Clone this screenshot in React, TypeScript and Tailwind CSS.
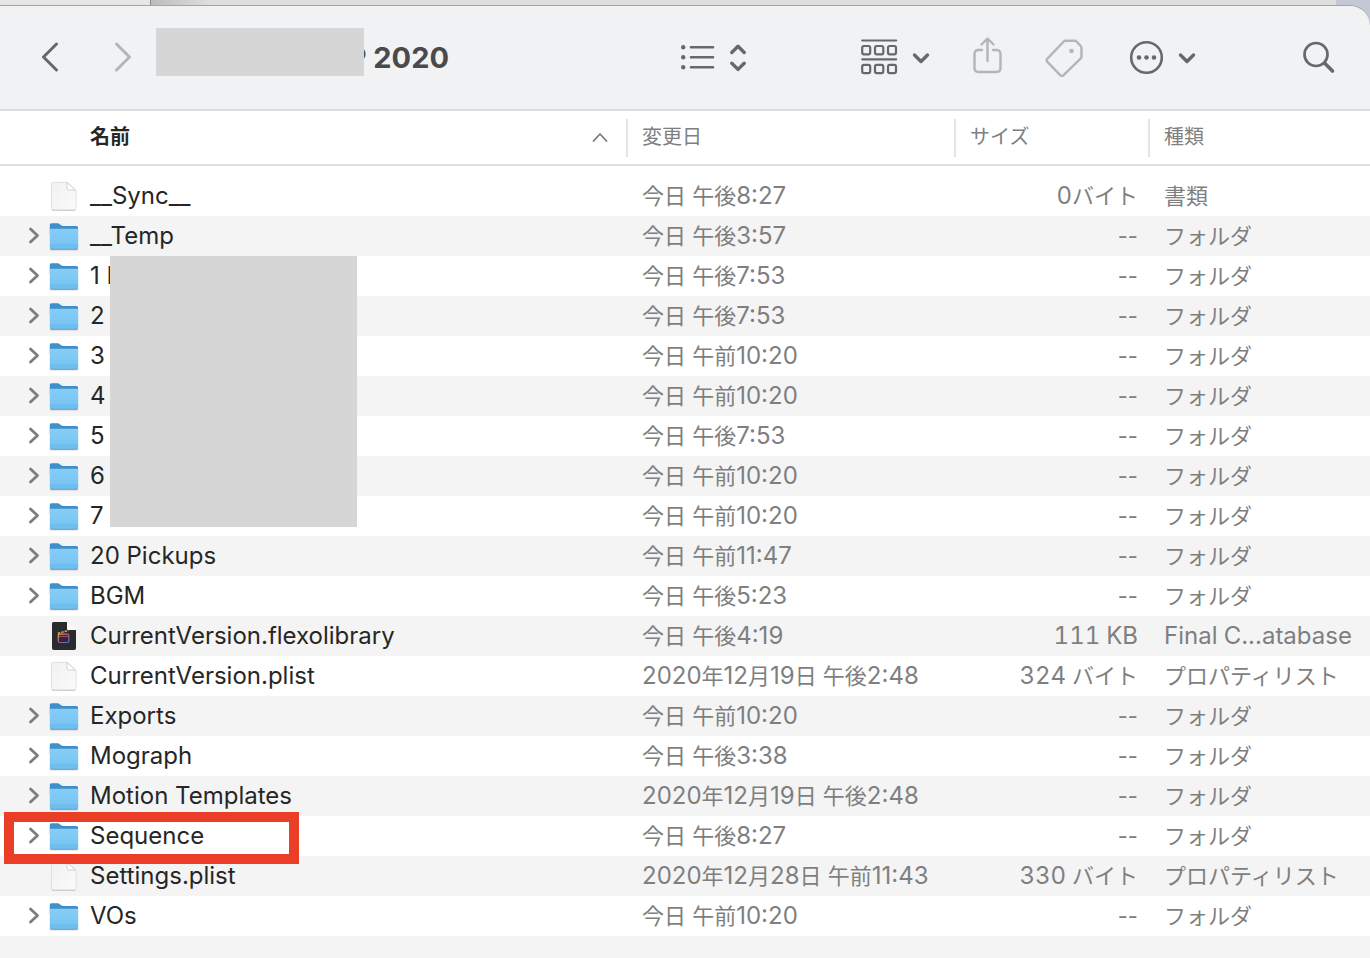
import type { ReactNode } from "react";

type Kind = "folder" | "file" | "library";

type Entry = {
  name: string;
  date: string;
  size?: string;
  type?: string;
  icon?: Kind;
  mark?: "redacted" | "highlight";
};

const entries: Entry[] = [
  { name: "__Sync__", date: "今日 午後8:27", size: "0バイト", type: "書類", icon: "file" },
  { name: "__Temp", date: "今日 午後3:57" },
  { name: "1 E", date: "今日 午後7:53", mark: "redacted" },
  { name: "2", date: "今日 午後7:53" },
  { name: "3", date: "今日 午前10:20" },
  { name: "4", date: "今日 午前10:20" },
  { name: "5", date: "今日 午後7:53" },
  { name: "6", date: "今日 午前10:20" },
  { name: "7", date: "今日 午前10:20" },
  { name: "20 Pickups", date: "今日 午前11:47" },
  { name: "BGM", date: "今日 午後5:23" },
  { name: "CurrentVersion.flexolibrary", date: "今日 午後4:19", size: "111 KB", type: "Final C...atabase", icon: "library" },
  { name: "CurrentVersion.plist", date: "2020年12月19日 午後2:48", size: "324 バイト", type: "プロパティリスト", icon: "file" },
  { name: "Exports", date: "今日 午前10:20" },
  { name: "Mograph", date: "今日 午後3:38" },
  { name: "Motion Templates", date: "2020年12月19日 午後2:48" },
  { name: "Sequence", date: "今日 午後8:27", mark: "highlight" },
  { name: "Settings.plist", date: "2020年12月28日 午前11:43", size: "330 バイト", type: "プロパティリスト", icon: "file" },
  { name: "VOs", date: "今日 午前10:20" },
];

function Defs() {
  return (
    <svg className="absolute h-0 w-0" aria-hidden="true">
      <defs>
        <linearGradient id="folderFront" x1="0" y1="0" x2="0" y2="1">
          <stop offset="0" stopColor="#86cdf8" />
          <stop offset="1" stopColor="#74c3f1" />
        </linearGradient>
        <linearGradient id="paper" x1="0" y1="0" x2="1" y2="1">
          <stop offset="0" stopColor="#f1f1f1" />
          <stop offset="1" stopColor="#fbfbfb" />
        </linearGradient>
        <linearGradient id="clap" x1="0" y1="0" x2="1" y2="1">
          <stop offset="0" stopColor="#e8c03c" />
          <stop offset="0.45" stopColor="#c14f9c" />
          <stop offset="1" stopColor="#4d6fd6" />
        </linearGradient>
      </defs>
    </svg>
  );
}

function FolderIcon() {
  return (
    <svg width="30" height="30" viewBox="0 0 30 30" aria-hidden="true">
      <path d="M1 27.500h28v1.300a1 1 0 0 1-1 .8H2a1 1 0 0 1-1-.8z" fill="#000" opacity="0.14" />
      <path d="M.8 3.800q0-1.500 1.500-1.500h6.400q1.200 0 2.100.9l1.300 1.100q.9.800 2.100.8h13.300q1.500 0 1.500 1.500V13H.8z" fill="#3f8fca" />
      <path d="M.8 9q0-1.200 1.200-1.200h26q1.200 0 1.200 1.200v18q0 1.500-1.500 1.500H2.300Q.8 28.500.8 27z" fill="url(#folderFront)" />
      <path d="M1 23.800h28M1 25.800h28" stroke="#5fb0e3" strokeWidth="0.7" />
      <path d="M1.400 28.200h27.200" stroke="#5299c8" strokeWidth="0.9" />
    </svg>
  );
}

function FileIcon() {
  return (
    <svg width="30" height="30" viewBox="0 0 30 30" aria-hidden="true">
      <path d="M4.500 1.300h13.500l9 8.200v17.800q0 1.700-1.700 1.700H4.200q-1.700 0-1.700-1.700V3q0-1.700 2-1.700z" fill="url(#paper)" stroke="#dadada" strokeWidth="0.8" />
      <path d="M3 29.300h23.500" stroke="#bdbdbd" strokeWidth="0.8" />
      <path d="M18 1.500v6q0 1.500 1.500 1.500h7z" fill="#fff" stroke="#c6c6c6" strokeWidth="0.8" />
    </svg>
  );
}

function LibraryIcon() {
  return (
    <svg width="30" height="30" viewBox="0 0 30 30" aria-hidden="true">
      <path d="M4.500 1h13.500v6.500q0 1.500 1.500 1.500H27v18.300q0 1.700-1.700 1.700H4.700Q3 29 3 27.300V2.500Q3 1 4.500 1z" fill="#2a2b2b" />
      <path d="M18 1l9 8h-7.500q-1.500 0-1.500-1.500z" fill="#fafafa" />
      <rect x="9.300" y="13.200" width="10.500" height="8.300" rx="1.200" fill="none" stroke="url(#clap)" strokeWidth="1.200" />
      <path d="M9.500 15.400h10.300" stroke="#c0508f" strokeWidth="0.9" />
      <path d="M8.800 12.200l10.700-2.600" stroke="#d9a73c" strokeWidth="1.500" strokeDasharray="2.500 1" />
    </svg>
  );
}

function RowIcon({ icon = "folder" }: { icon?: Kind }) {
  if (icon === "file") return <FileIcon />;
  if (icon === "library") return <LibraryIcon />;
  return <FolderIcon />;
}

function Stroke({ w, h, d, sw = 3 }: { w: number; h: number; d: string; sw?: number }) {
  return (
    <svg
      width={w}
      height={h}
      viewBox={`0 0 ${w} ${h}`}
      fill="none"
      stroke="currentColor"
      strokeWidth={sw}
      strokeLinecap="round"
      strokeLinejoin="round"
      aria-hidden="true"
    >
      <path d={d} />
    </svg>
  );
}

function ToolButton({ label, dim, children }: { label: string; dim?: boolean; children: ReactNode }) {
  return (
    <button
      type="button"
      aria-label={label}
      className={`flex flex-none items-center gap-3.5 ${dim ? "text-[#b4b5b7]" : "text-[#67686a]"}`}
    >
      {children}
    </button>
  );
}

const chevronDown = "M2.500 6L9 12.500 15.500 6";

function Toolbar() {
  return (
    <header className="flex h-[106px] items-center rounded-tr-[20px] border-t border-b-2 border-t-[#a5a5a7] border-b-[#dcdcde] bg-[#f1f2f4] pr-[34px] pl-[38px]">
      <div className="flex items-center gap-[49px]">
        <ToolButton label="戻る">
          <Stroke w={24} h={32} d="M18.500 2L5.500 15l13 13" />
        </ToolButton>
        <ToolButton label="進む" dim>
          <Stroke w={24} h={32} d="M5.500 2l13 13-13 13" />
        </ToolButton>
      </div>
      <h1 className="relative ml-[21px] w-[293px] flex-none text-right text-[29px] leading-9 font-bold text-[#4a4a4c]">
        P 2020
        <span className="absolute -top-3 left-0 h-12 w-52 bg-[#d6d6d6]" />
      </h1>
      <div className="ml-auto flex items-center">
        <ToolButton label="表示">
          <svg width="35" height="26" viewBox="0 0 35 26" fill="currentColor" aria-hidden="true">
            <circle cx="2.200" cy="2.200" r="2.200" />
            <circle cx="2.200" cy="12.200" r="2.200" />
            <circle cx="2.200" cy="22.200" r="2.200" />
            <path d="M10 2.200h22M10 12.200h22M10 22.200h22" stroke="currentColor" strokeWidth="2.600" strokeLinecap="round" />
          </svg>
          <Stroke w={18} h={30} d="M1.800 9.500L8 3.300l6.200 6.200M1.800 20.200L8 26.400l6.200-6.200" sw={3.4} />
        </ToolButton>
        <div className="ml-[113px] flex items-center gap-[42px]">
          <ToolButton label="グループ分け">
            <svg width="37" height="38" viewBox="0 0 37 38" fill="none" stroke="currentColor" strokeWidth="2.200" strokeLinecap="round" aria-hidden="true">
              <path d="M1.200 1.500h34M1.200 20.300h34" />
              <rect x="1.200" y="7" width="8" height="8.300" rx="1.800" />
              <rect x="14" y="7" width="8.300" height="8.300" rx="1.800" />
              <rect x="27" y="7" width="8" height="8.300" rx="1.800" />
              <rect x="1.200" y="25.800" width="8" height="8.300" rx="1.800" />
              <rect x="14" y="25.800" width="8.300" height="8.300" rx="1.800" />
              <rect x="27" y="25.800" width="8" height="8.300" rx="1.800" />
            </svg>
            <Stroke w={18} h={18} d={chevronDown} sw={3.4} />
          </ToolButton>
          <ToolButton label="共有" dim>
            <Stroke
              w={31}
              h={42}
              d="M10 13H6.500Q2.500 13 2.500 17v14q0 4 4 4h18q4 0 4-4V17q0-4-4-4H21M15.500 24V2M9.500 7.500l6-6 6 6"
              sw={2.4}
            />
          </ToolButton>
          <ToolButton label="タグ" dim>
            <svg width="38" height="38" viewBox="0 0 38 38" fill="none" stroke="currentColor" strokeWidth="2.400" strokeLinejoin="round" aria-hidden="true">
              <path d="M20.500 1.800h9.300q1 0 1.700.7l4.300 4.600q.7.700.7 1.700v8.800q0 1-.7 1.700L18.600 36.100q-1.700 1.700-3.400 0L2.400 22.800q-1.500-1.600 0-3.200L18.800 2.500q.7-.7 1.700-.7z" />
              <circle cx="26.500" cy="12" r="2.300" fill="currentColor" stroke="none" />
            </svg>
          </ToolButton>
        </div>
        <div className="ml-[45px] flex items-center gap-[106px]">
          <ToolButton label="操作">
            <svg width="36" height="36" viewBox="0 0 36 36" fill="none" aria-hidden="true">
              <circle cx="18.500" cy="17.500" r="15.300" stroke="currentColor" strokeWidth="2.600" />
              <g fill="currentColor">
                <circle cx="11" cy="17.500" r="2.300" />
                <circle cx="18.500" cy="17.500" r="2.300" />
                <circle cx="26" cy="17.500" r="2.300" />
              </g>
            </svg>
            <Stroke w={18} h={18} d={chevronDown} sw={3.4} />
          </ToolButton>
          <ToolButton label="検索">
            <svg width="34" height="34" viewBox="0 0 34 34" fill="none" stroke="currentColor" strokeLinecap="round" aria-hidden="true">
              <circle cx="14" cy="13.500" r="11.500" strokeWidth="2.700" />
              <path d="M23 22.500l7.500 7.500" strokeWidth="3.600" />
            </svg>
          </ToolButton>
        </div>
      </div>
    </header>
  );
}

function HeadCell({ children }: { children: ReactNode }) {
  return (
    <th scope="col" className="p-0 text-left font-normal">
      <div className="-ml-0.5 flex h-[38px] items-center border-l-2 border-[#e4e4e4] pb-0.5 pl-3.5">{children}</div>
    </th>
  );
}

// Latin letters and digits are set one step larger than kanji and kana
function Mixed({ text }: { text: string }) {
  return text
    .split(/([\x21-\x7e]+)/)
    .map((part, i) => (i % 2 ? <span key={i} className="text-2xl leading-8">{part}</span> : part));
}

function Row({ entry }: { entry: Entry }) {
  const { name, date, size, type = "フォルダ", icon, mark } = entry;
  return (
    <tr className="h-10 odd:bg-white even:bg-[#f4f4f4]">
      <td className="relative p-0">
        <div className="flex items-center pl-[27px] text-2xl leading-8 text-[#262626]">
          {icon ? (
            <span className="w-3.5" />
          ) : (
            <button type="button" aria-label={`${name} を開く`} className="text-[#7d7d7d]">
              <Stroke w={14} h={20} d="M3.500 3l7 6.500-7 6.500" sw={2.8} />
            </button>
          )}
          <span className="ml-2 flex-none">
            <RowIcon icon={icon} />
          </span>
          <span className="ml-[11px] whitespace-nowrap">{name}</span>
        </div>
        {mark === "redacted" && <div className="absolute top-0 left-[110px] z-10 h-[271px] w-[247px] bg-[#d6d6d6]" />}
        {mark === "highlight" && (
          <div className="pointer-events-none absolute -top-1 left-1 z-10 h-[52px] w-[295px] border-10 border-[#ea3f26]" />
        )}
      </td>
      <td className="p-0 pl-3.5 whitespace-nowrap">
        <Mixed text={date} />
      </td>
      <td className="p-0 pr-3 text-right whitespace-nowrap">
        {size ? (
          <span className="tabular-nums">
            <Mixed text={size} />
          </span>
        ) : (
          "--"
        )}
      </td>
      <td className="p-0 pl-3.5 whitespace-nowrap">
        <Mixed text={type} />
      </td>
    </tr>
  );
}

export default function App() {
  return (
    <div className="flex min-h-screen flex-col bg-[#f4f4f4] font-['Inter','Noto_Sans_CJK_JP',sans-serif]">
      <Defs />
      <div className="bg-[#dedede]">
        <div className="flex h-[5px]">
          <div className="w-[151px] border-r border-[#8b8b8b] bg-[#e6e6e6]" />
          <div className="flex-1 bg-linear-to-r from-[#bcbcbc] to-[#dedede] to-5%" />
          <div className="w-[34px] bg-[#c3c9d4]" />
        </div>
        <div className="bg-linear-to-l from-[#c3c9d4] from-[34px] to-[#dedede] to-[34px]">
          <Toolbar />
        </div>
      </div>
      <table className="w-full table-fixed border-collapse text-[22px] leading-8 text-[#7f7f7f]">
        <colgroup>
          <col />
          <col className="w-[328px]" />
          <col className="w-[194px]" />
          <col className="w-[220px]" />
        </colgroup>
        <thead className="bg-white text-xl">
          <tr className="h-[54px] border-b-2 border-[#e0e0e0]">
            <th scope="col" aria-sort="ascending" className="p-0 text-left font-semibold text-[#262626]">
              <div className="flex items-center justify-between pr-5 pb-0.5 pl-[90px]">
                名前
                <span className="text-[#7a7a7a]">
                  <Stroke w={16} h={12} d="M1.500 10L8 3l6.500 7" sw={1.8} />
                </span>
              </div>
            </th>
            <HeadCell>変更日</HeadCell>
            <HeadCell>サイズ</HeadCell>
            <HeadCell>種類</HeadCell>
          </tr>
        </thead>
        <tbody className="bg-white">
          <tr className="h-[11px]" aria-hidden="true">
            <td colSpan={4} className="p-0" />
          </tr>
        </tbody>
        <tbody>
          {entries.map((entry) => (
            <Row key={entry.name} entry={entry} />
          ))}
        </tbody>
      </table>
    </div>
  );
}
